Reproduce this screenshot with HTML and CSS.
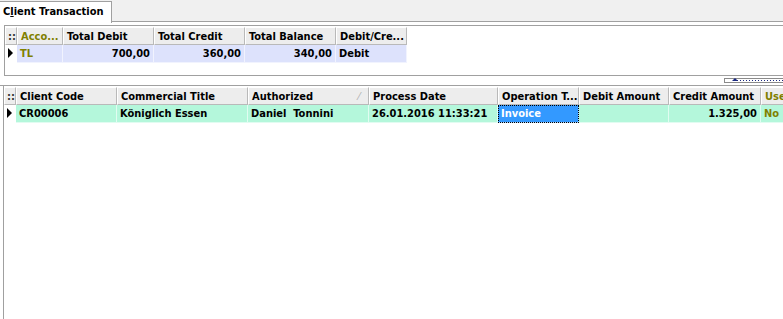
FILE: index.html
```html
<!DOCTYPE html>
<html lang="en">
<head>
  <meta charset="UTF-8" />
  <title>Client Transaction</title>
  <link rel="stylesheet" href="styles.css">
</head>
<body>

<div class="tabs">
  <div class="tab">C<span class="u">l</span>ient Transaction</div>
</div>

<div class="page">
  <div class="summary">
    <div class="row head">
      <div class="cell ind">::</div>
      <div class="cell olive" style="width:46px">Acco...</div>
      <div class="cell" style="width:91px">Total Debit</div>
      <div class="cell" style="width:91px">Total Credit</div>
      <div class="cell" style="width:91px">Total Balance</div>
      <div class="cell" style="width:71px">Debit/Cre...</div>
    </div>
    <div class="row data lav">
      <div class="cell ind"><span class="arrow"></span></div>
      <div class="cell olive" style="width:46px">TL</div>
      <div class="cell num" style="width:91px">700,00</div>
      <div class="cell num" style="width:91px">360,00</div>
      <div class="cell num" style="width:91px">340,00</div>
      <div class="cell" style="width:71px">Debit</div>
    </div>
  </div>

  <div class="splitter"><div class="grip"><span class="up"></span></div></div>

  <div class="detail">
    <div class="row head">
      <div class="cell ind">::</div>
      <div class="cell" style="width:101px">Client Code</div>
      <div class="cell" style="width:131px">Commercial Title</div>
      <div class="cell sorted" style="width:121px">Authorized<span class="sort">&#8260;</span></div>
      <div class="cell" style="width:129px">Process Date</div>
      <div class="cell" style="width:81px">Operation T...</div>
      <div class="cell" style="width:90px">Debit Amount</div>
      <div class="cell" style="width:92px">Credit Amount</div>
      <div class="cell olive" style="width:40px">User</div>
    </div>
    <div class="row data mint">
      <div class="cell ind"><span class="arrow"></span></div>
      <div class="cell" style="width:101px">CR00006</div>
      <div class="cell" style="width:131px">Königlich Essen</div>
      <div class="cell" style="width:121px">Daniel&nbsp; Tonnini</div>
      <div class="cell" style="width:129px">26.01.2016 11:33:21</div>
      <div class="cell focus" style="width:81px">Invoice</div>
      <div class="cell" style="width:90px"></div>
      <div class="cell num" style="width:92px">1.325,00</div>
      <div class="cell olive" style="width:40px">No</div>
    </div>
  </div>
</div>

</body>
</html>
```

FILE: styles.css
```css
body {
  margin: 0;
  width: 783px;
  height: 319px;
  overflow: hidden;
  background: #fff;
  font-family: Tahoma, "DejaVu Sans Condensed", "Liberation Sans", sans-serif;
  font-stretch: condensed;
  font-size: 11px;
  font-weight: bold;
  color: #000;
}
.tabs {
  height: 21px;
  background: #f0f0f0;
  border-bottom: 1px solid #a0a0a0;
  position: relative;
}
.tab {
  position: absolute;
  left: 0;
  top: 1px;
  width: 108px;
  height: 21px;
  padding-left: 3px;
  line-height: 19px;
  background: #fff;
  border: 1px solid #a0a0a0;
  border-bottom: none;
  border-left: none;
}
.u {
  text-decoration: underline;
}
.page {
  padding-top: 3px;
}
.summary {
  margin-left: 4px;
  height: 48px;
  border: 1px solid #a0a0a0;
  border-right: none;
  padding-top: 1px;
}
.row {
  display: flex;
  height: 18px;
}
.cell {
  box-sizing: border-box;
  height: 18px;
  line-height: 17px;
  padding: 0 3px;
  white-space: nowrap;
  overflow: hidden;
  flex: none;
}
.head .cell {
  background: #ededed;
  border-right: 1px solid #b9b9b9;
  border-bottom: 1px solid #b9b9b9;
  border-top: 1px solid #fff;
  border-left: 1px solid #fff;
}
.data .cell {
  border-right: 1px solid rgba(255, 255, 255, 0.6);
  border-bottom: 1px solid rgba(255, 255, 255, 0.6);
}
.ind {
  width: 12px;
  padding: 0 2px;
  color: #000;
}
.head .ind {
  color: #333;
  letter-spacing: 0;
}
.data .ind {
  position: relative;
}
.arrow {
  position: absolute;
  left: 3px;
  top: 3px;
  border-top: 5px solid transparent;
  border-bottom: 5px solid transparent;
  border-left: 5px solid #000;
}
.olive {
  color: #808000;
}
.num {
  text-align: right;
}
.lav .cell {
  background: #dde2fc;
}
.mint .cell {
  background: #b4f7db;
}
.data .ind {
  background: #fff;
}
.sorted {
  position: relative;
}
.sort {
  position: absolute;
  right: 8px;
  top: 0;
  color: #b0b0b0;
  font-weight: normal;
}
.splitter {
  height: 9px;
  border-bottom: 1px solid #a0a0a0;
  position: relative;
}
.grip {
  position: absolute;
  right: 0;
  top: 2px;
  width: 58px;
  height: 3px;
  border: 1px solid #8a8a8a;
  border-right: none;
  background: repeating-linear-gradient(90deg, #1c2a80 0 1px, transparent 1px 3px) 12px 1px / 46px 1px no-repeat;
}
.up {
  position: absolute;
  left: 7px;
  top: -1px;
  border-left: 3px solid transparent;
  border-right: 3px solid transparent;
  border-bottom: 3px solid #1c2a80;
}
.detail {
  margin-left: 3px;
  border-left: 1px solid #a0a0a0;
  height: 240px;
  padding-top: 1px;
}
.mint .focus {
  background: #3399ff;
  color: #fff;
  outline: 1px dotted #000;
  outline-offset: -1px;
}
```
